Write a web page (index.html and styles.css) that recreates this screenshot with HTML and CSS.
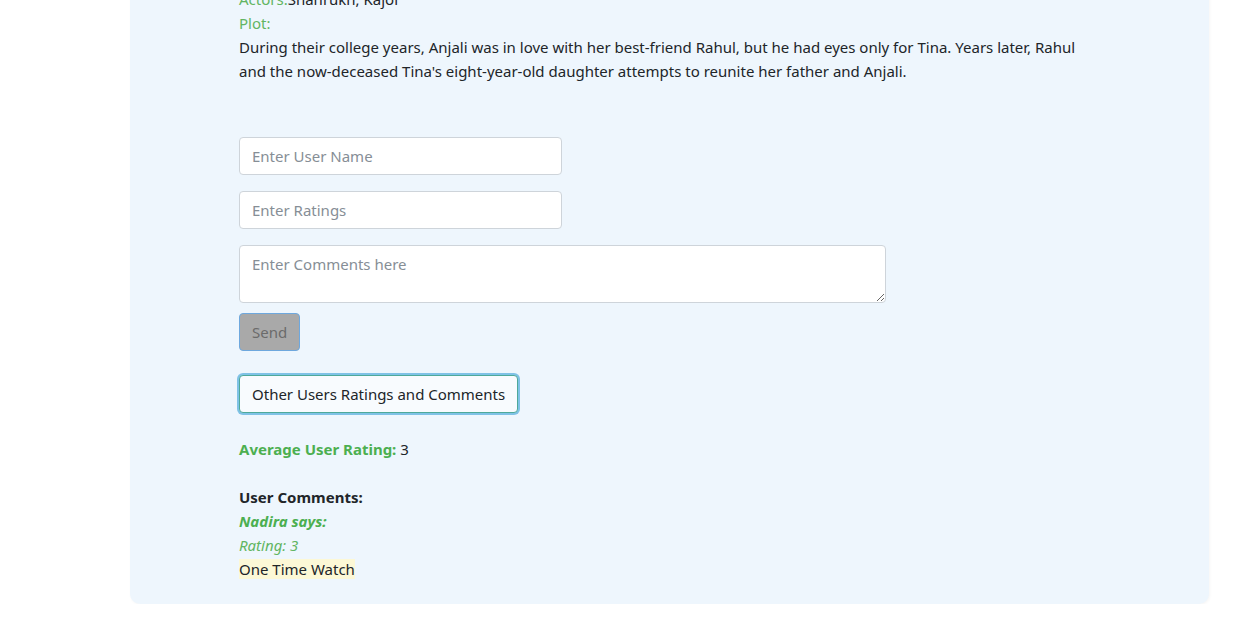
FILE: index.html
```html
<!DOCTYPE html>
<html lang="en">
<head>
<meta charset="utf-8">
<title>Movie Details</title>
<link rel="stylesheet" href="styles.css">
</head>
<body>
<div class="card">
  <div class="details">
    <div class="line"><span class="label">Actors:</span>Shahrukh, Kajol</div>
    <div class="line"><span class="label">Plot:</span></div>
    <p class="plot">During their college years, Anjali was in love with her best-friend Rahul, but he had eyes only for Tina. Years later, Rahul and the now-deceased Tina's eight-year-old daughter attempts to reunite her father and Anjali.</p>
  </div>
  <form class="review">
    <input class="field" type="text" placeholder="Enter User Name">
    <input class="field" type="text" placeholder="Enter Ratings">
    <textarea class="comments" placeholder="Enter Comments here"></textarea>
    <button class="send" type="button">Send</button>
  </form>
  <button class="others" type="button">Other Users Ratings and Comments</button>
  <div class="summary">
    <div class="avg"><b class="green">Average User Rating:</b> 3</div>
    <div class="heading">User Comments:</div>
    <div class="who">Nadira says:</div>
    <div class="rating">Rating: 3</div>
    <div><mark class="note">One Time Watch</mark></div>
  </div>
</div>
</body>
</html>
```
FILE: styles.css
```css
html, body {
  margin: 0;
  padding: 0;
  background: #ffffff;
}
body {
  font-family: "Noto Sans", "Open Sans", sans-serif;
  font-size: 15px;
  line-height: 24px;
  color: #212529;
  overflow: hidden;
}
.card {
  margin: -40px 0 0 130px;
  width: 970px;
  padding: 27px 0 23px 109px;
  background: #eef6fd;
  border-radius: 10px;
  box-shadow: 1px 1px 3px rgba(0, 0, 0, 0.04);
}
.details {
  width: 862px;
}
.line {
  height: 24px;
}
.label {
  color: #62b562;
}
.plot {
  margin: 0;
}
.review {
  display: flex;
  flex-direction: column;
  align-items: flex-start;
  margin-top: 54px;
  gap: 16px;
}
.field, .comments {
  box-sizing: border-box;
  font-family: inherit;
  font-size: 15px;
  color: #495057;
  background: #ffffff;
  border: 1px solid #ced4da;
  border-radius: 4px;
  padding: 6px 12px;
  margin: 0;
}
.field {
  width: 323px;
  height: 38px;
}
.comments {
  width: 647px;
  height: 58px;
  padding-top: 8px;
  resize: vertical;
  display: block;
}
.field::placeholder, .comments::placeholder {
  color: #868e96;
}
.send {
  margin-top: -6px;
  box-sizing: border-box;
  height: 38px;
  padding: 0 12px;
  font-family: inherit;
  font-size: 15px;
  color: #6b6b6b;
  background: #a9a9a9;
  border: 1px solid #6ea8de;
  border-radius: 4px;
}
.others {
  display: block;
  margin-top: 24px;
  box-sizing: border-box;
  height: 38px;
  padding: 0 12px;
  font-family: inherit;
  font-size: 15px;
  color: #212529;
  background: #f8fbfe;
  border: 1px solid #4ea99a;
  border-radius: 4px;
  box-shadow: 0 0 0 2px #7fc2e6;
}
.summary {
  margin-top: 24px;
}
.green {
  color: #4caf50;
}
.avg {
  margin-bottom: 24px;
}
.heading {
  font-weight: 700;
}
.who {
  font-weight: 700;
  font-style: italic;
  color: #4caf50;
}
.rating {
  font-style: italic;
  color: #62b562;
}
.note {
  background: #fcf8d6;
  color: #212529;
  padding: 0;
}
```
